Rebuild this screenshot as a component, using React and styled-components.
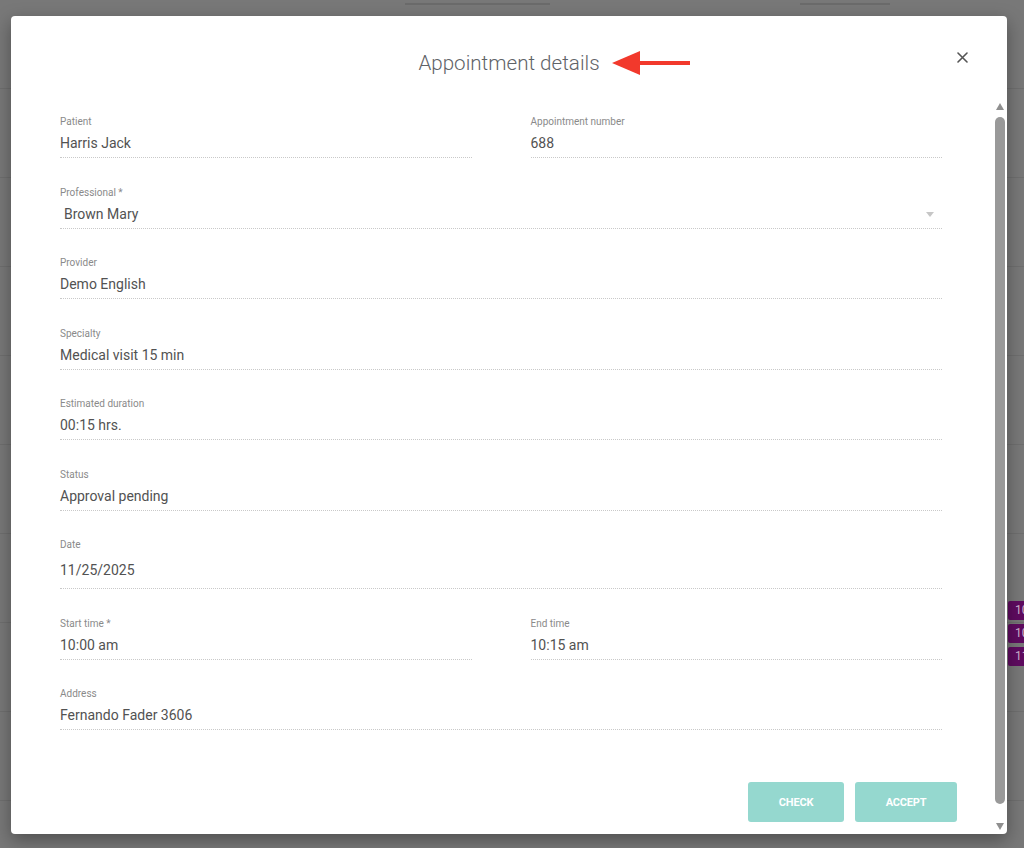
import styled, { createGlobalStyle } from "styled-components";

const GlobalStyle = createGlobalStyle`
  * { box-sizing: border-box; }
  body {
    margin: 0;
    background: #787878;
    font-family: Roboto, "Liberation Sans", Arial, sans-serif;
  }
`;

const Screen = styled.div`
  position: relative;
  width: 1024px;
  height: 848px;
  overflow: hidden;
  padding: 16px 17px 14px 11px;
  background:
    repeating-linear-gradient(
      to bottom,
      transparent 0,
      transparent 88px,
      rgba(0, 0, 0, 0.08) 88px,
      rgba(0, 0, 0, 0.08) 89px
    ),
    #787878;
`;

// calendar events of the page under the overlay
const EventChip = styled.div`
  position: absolute;
  left: 1008px;
  width: 40px;
  height: 19px;
  background: #5f0b60;
  color: #cdb3cd;
  font-size: 12px;
  line-height: 19px;
  padding-left: 7px;
  border-radius: 2px 0 0 2px;
`;

const TopStrip = styled.div`
  position: absolute;
  top: 3px;
  height: 2px;
  background: rgba(0, 0, 0, 0.1);
`;

const Modal = styled.div`
  position: relative;
  height: 100%;
  display: flex;
  flex-direction: column;
  background: #fff;
  border-radius: 4px;
  box-shadow: 0 6px 18px rgba(0, 0, 0, 0.35);
`;

const Header = styled.div`
  position: relative;
  height: 80px;
  display: flex;
  justify-content: center;
  padding-top: 34px;
`;

const Title = styled.h2`
  position: relative;
  margin: 0;
  font-size: 20.6px;
  line-height: 26px;
  font-weight: 300;
  color: #5f6368;
`;

const Pointer = styled.svg`
  position: absolute;
  left: calc(100% + 12px);
  top: 0;
`;

const CloseButton = styled.button`
  position: absolute;
  top: 34px;
  right: 38px;
  width: 14px;
  height: 14px;
  padding: 0;
  border: none;
  background: none;
  cursor: pointer;
  display: flex;
  align-items: center;
  justify-content: center;
`;

const Body = styled.div`
  flex: 1;
  display: flex;
  min-height: 0;
`;

const Content = styled.div`
  flex: 1;
  display: flex;
  flex-direction: column;
  padding: 20px 36px 12px 49px;
`;

const Fields = styled.div`
  width: 882px;
  display: flex;
  flex-direction: column;
  gap: 28.5px;
`;

const Row = styled.div`
  display: grid;
  grid-template-columns: 1fr 1fr;
  column-gap: 59px;
`;

const Field = styled.div`
  position: relative;
  border-bottom: 1px dotted #c9c9c9;
  padding-bottom: 4px;
`;

const Label = styled.div`
  font-size: 10px;
  line-height: 12px;
  color: #8a8a8a;
`;

const Value = styled.div`
  margin-top: 5px;
  font-size: 14px;
  line-height: ${(p) => (p.$tall ? "28px" : "20px")};
  color: #525252;
  padding-left: ${(p) => (p.$indent ? "4px" : "0")};
`;

const Caret = styled.span`
  position: absolute;
  right: 8px;
  top: 25px;
  width: 0;
  height: 0;
  border-left: 4.5px solid transparent;
  border-right: 4.5px solid transparent;
  border-top: 5px solid #c6c6c6;
`;

const Footer = styled.div`
  margin-top: auto;
  display: flex;
  justify-content: flex-end;
  gap: 11px;
`;

const ActionButton = styled.button`
  width: ${(p) => p.$w}px;
  height: 40px;
  border: none;
  border-radius: 3px;
  background: #95d8cf;
  color: #fff;
  font-family: Roboto, "Liberation Sans", Arial, sans-serif;
  font-size: 11px;
  font-weight: 700;
  letter-spacing: -0.2px;
  cursor: pointer;
`;

const ScrollTrack = styled.div`
  width: 14px;
  display: flex;
  flex-direction: column;
  align-items: center;
  padding: 7px 0 4px;
`;

const ArrowUp = styled.span`
  width: 0;
  height: 0;
  border-left: 4.5px solid transparent;
  border-right: 4.5px solid transparent;
  border-bottom: 7px solid #8f8f8f;
`;

const ArrowDown = styled(ArrowUp)`
  border-bottom: none;
  border-top: 7px solid #8f8f8f;
`;

const Thumb = styled.div`
  flex: 1;
  width: 10px;
  margin: 7px 0 19px;
  border-radius: 5px;
  background: #999;
`;

const FieldBox = ({ label, value, tall, indent, select }) => (
  <Field>
    <Label>{label}</Label>
    <Value $tall={tall} $indent={indent}>
      {value}
    </Value>
    {select && <Caret />}
  </Field>
);

export default function App() {
  return (
    <>
      <GlobalStyle />
      <Screen>
        <TopStrip style={{ left: 405, width: 145 }} />
        <TopStrip style={{ left: 800, width: 90 }} />
        <EventChip style={{ top: 601 }}>10</EventChip>
        <EventChip style={{ top: 624 }}>10</EventChip>
        <EventChip style={{ top: 647 }}>11</EventChip>

        <Modal>
          <Header>
            <Title>
              Appointment details
              <Pointer width="80" height="26" viewBox="0 0 80 26">
                <polygon points="0,13 28,1 28,25" fill="#f2392c" />
                <rect x="26" y="11" width="52" height="4" fill="#f2392c" />
              </Pointer>
            </Title>
            <CloseButton aria-label="Close">
              <svg width="11" height="11" viewBox="0 0 11 11">
                <path
                  d="M1 1 L10 10 M10 1 L1 10"
                  stroke="#555"
                  strokeWidth="1.6"
                  strokeLinecap="round"
                />
              </svg>
            </CloseButton>
          </Header>

          <Body>
            <Content>
              <Fields>
                <Row>
                  <FieldBox label="Patient" value="Harris Jack" />
                  <FieldBox label="Appointment number" value="688" />
                </Row>
                <FieldBox label="Professional *" value="Brown Mary" indent select />
                <FieldBox label="Provider" value="Demo English" />
                <FieldBox label="Specialty" value="Medical visit 15 min" />
                <FieldBox label="Estimated duration" value="00:15 hrs." />
                <FieldBox label="Status" value="Approval pending" />
                <FieldBox label="Date" value="11/25/2025" tall />
                <Row>
                  <FieldBox label="Start time *" value="10:00 am" />
                  <FieldBox label="End time" value="10:15 am" />
                </Row>
                <FieldBox label="Address" value="Fernando Fader 3606" />
              </Fields>

              <Footer>
                <ActionButton $w={96}>CHECK</ActionButton>
                <ActionButton $w={102}>ACCEPT</ActionButton>
              </Footer>
            </Content>

            <ScrollTrack>
              <ArrowUp />
              <Thumb />
              <ArrowDown />
            </ScrollTrack>
          </Body>
        </Modal>
      </Screen>
    </>
  );
}
